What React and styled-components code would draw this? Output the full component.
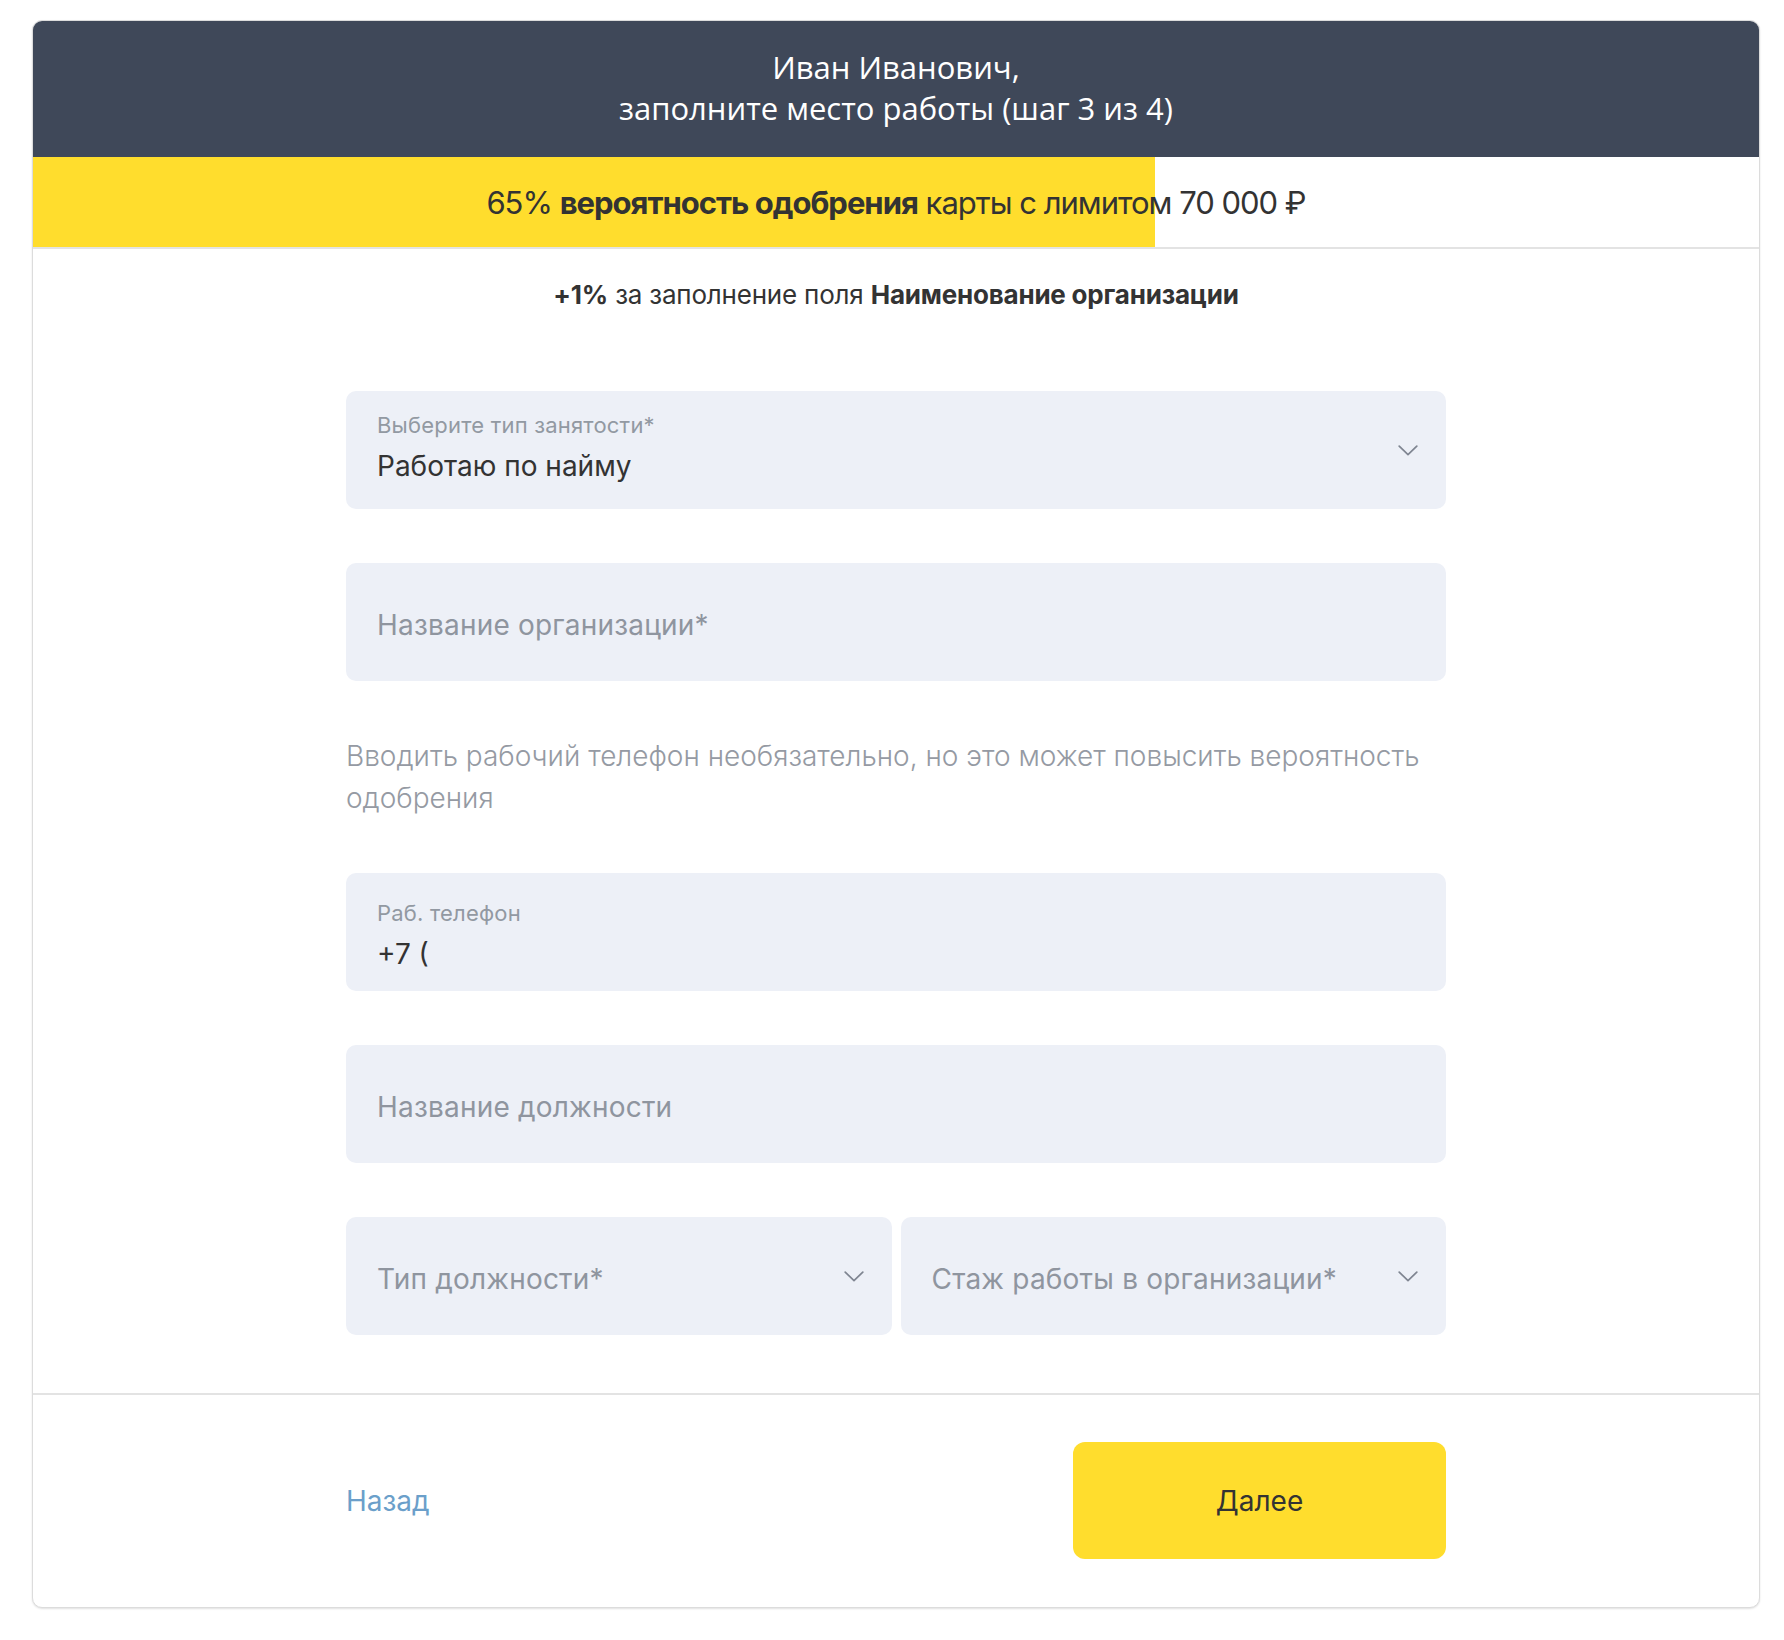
import React from 'react';
import styled, { createGlobalStyle } from 'styled-components';

const GlobalStyle = createGlobalStyle`
  body {
    margin: 0;
    background: #fff;
    font-family: Inter, "Noto Sans", Arial, sans-serif;
    color: #333;
  }
`;

const Page = styled.div`
  padding: 20px 24px 32px 32px;
`;

const Card = styled.div`
  border: 1px solid #dcdcdc;
  border-radius: 10px;
  overflow: hidden;
  box-shadow: 0 1px 2px rgba(0, 0, 0, 0.12);
  background: #fff;
`;

const Header = styled.div`
  background: #3f4859;
  color: #fff;
  text-align: center;
  font-family: "Open Sans", Arial, sans-serif;
  font-size: 31px;
  line-height: 41px;
  padding: 26px 20px 28px;
`;

const Progress = styled.div`
  height: 90px;
  display: flex;
  align-items: center;
  justify-content: center;
  border-bottom: 2px solid #e3e3e3;
  background: linear-gradient(to right, #ffdd2d ${p => p.$value}%, #fff ${p => p.$value}%);
  font-size: 31px;
  letter-spacing: -1px;
  color: #333;

  b {
    font-weight: 700;
  }
`;

const Hint = styled.div`
  text-align: center;
  font-size: 26px;
  line-height: 32px;
  padding-top: 30px;
  letter-spacing: -0.2px;
  color: #333;

  b {
    font-weight: 700;
  }
`;

const Form = styled.div`
  width: 1100px;
  margin: 0 auto;
  padding: 80px 0 4px;
`;

const Field = styled.div`
  height: 118px;
  box-sizing: border-box;
  background: #edf0f7;
  border-radius: 10px;
  margin-bottom: 54px;
  padding: 0 28px 0 31px;
  display: flex;
  align-items: center;
  justify-content: space-between;
`;

const FieldBody = styled.div`
  display: flex;
  flex-direction: column;
  padding-bottom: ${p => (p.$lift ? 6 : 0)}px;
  padding-top: ${p => (p.$drop ? 6 : 0)}px;
`;

const Label = styled.div`
  font-size: 22px;
  line-height: 26px;
  color: #9299a2;
  margin-bottom: 11px;
  letter-spacing: 0.2px;
`;

const Value = styled.div`
  font-size: 28px;
  line-height: 34px;
  color: #333;
`;

const Placeholder = styled.div`
  font-size: 28px;
  line-height: 34px;
  padding-top: 5px;
  letter-spacing: 0.2px;
  color: #8f959f;
`;

const Note = styled.p`
  margin: 0 0 54px;
  font-size: 28px;
  line-height: 42px;
  font-weight: 300;
  color: #959aa3;
`;

const Row = styled.div`
  display: grid;
  grid-template-columns: 1fr 1fr;
  gap: 9px;
`;

const Footer = styled.div`
  border-top: 2px solid #e3e3e3;
  padding: 47px 0 48px;
`;

const FooterInner = styled.div`
  width: 1100px;
  margin: 0 auto;
  display: flex;
  align-items: center;
  justify-content: space-between;
`;

const BackLink = styled.a`
  font-size: 28px;
  color: #6b9fca;
  text-decoration: none;
  cursor: pointer;
`;

const NextButton = styled.button`
  width: 373px;
  height: 117px;
  border: none;
  border-radius: 12px;
  background: #ffdd2d;
  font-family: inherit;
  font-size: 28px;
  color: #333;
  cursor: pointer;
`;

const Chevron = () => (
  <svg width="20" height="11" viewBox="0 0 20 11" fill="none">
    <polyline points="1.2,1.2 10,9.6 18.8,1.2" stroke="#7f8591" strokeWidth="1.7" strokeLinecap="round" strokeLinejoin="round" />
  </svg>
);

const SelectField = ({ label, value, placeholder }) => (
  <Field>
    <FieldBody $lift={!!label}>
      {label && <Label>{label}</Label>}
      {value && <Value>{value}</Value>}
      {placeholder && <Placeholder>{placeholder}</Placeholder>}
    </FieldBody>
    <Chevron />
  </Field>
);

export default function App() {
  const chance = 65;
  return (
    <Page>
      <GlobalStyle />
      <Card>
        <Header>
          Иван Иванович,
          <br />
          заполните место работы (шаг 3 из 4)
        </Header>
        <Progress $value={chance}>
          <span>
            {chance}% <b>вероятность одобрения</b> карты с лимитом 70 000 ₽
          </span>
        </Progress>
        <Hint>
          <b>+1%</b> за заполнение поля <b>Наименование организации</b>
        </Hint>
        <Form>
          <SelectField label="Выберите тип занятости*" value="Работаю по найму" />
          <Field>
            <Placeholder>Название организации*</Placeholder>
          </Field>
          <Note>
            Вводить рабочий телефон необязательно, но это может повысить вероятность одобрения
          </Note>
          <Field>
            <FieldBody $drop>
              <Label>Раб. телефон</Label>
              <Value>+7 (</Value>
            </FieldBody>
          </Field>
          <Field>
            <Placeholder>Название должности</Placeholder>
          </Field>
          <Row>
            <SelectField placeholder="Тип должности*" />
            <SelectField placeholder="Стаж работы в организации*" />
          </Row>
        </Form>
        <Footer>
          <FooterInner>
            <BackLink>Назад</BackLink>
            <NextButton>Далее</NextButton>
          </FooterInner>
        </Footer>
      </Card>
    </Page>
  );
}
